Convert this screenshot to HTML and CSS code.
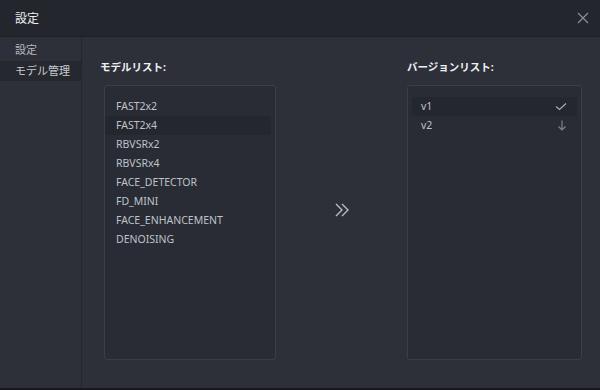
FILE: index.html
```html
<!DOCTYPE html>
<html>
<head>
<meta name="viewport" content="width=device-width, initial-scale=1">
<link rel="stylesheet" href="styles.css">
</head>
<body>

<div class="window">
  <div class="titlebar">
    <span class="title">設定</span>
    <button class="close_btn">
      <svg width="12" height="12" viewBox="0 0 12 12"><path d="M1 1L11 11M11 1L1 11" stroke="#8b8e97" stroke-width="1.2" fill="none"/></svg>
    </button>
  </div>

  <div class="main">
    <div class="sidebar">
      <div class="side_item">設定</div>
      <div class="side_item active">モデル管理</div>
    </div>

    <div class="content">
      <div class="column models">
        <div class="col_title">モデルリスト:</div>
        <div class="listbox">
          <div class="row">FAST2x2</div>
          <div class="row selected">FAST2x4</div>
          <div class="row">RBVSRx2</div>
          <div class="row">RBVSRx4</div>
          <div class="row">FACE_DETECTOR</div>
          <div class="row">FD_MINI</div>
          <div class="row">FACE_ENHANCEMENT</div>
          <div class="row">DENOISING</div>
        </div>
      </div>

      <div class="middle">
        <svg width="16" height="16" viewBox="0 0 16 16"><path d="M2 2L8 8L2 14M8 2L14 8L8 14" stroke="#b9bcc4" stroke-width="1.4" fill="none"/></svg>
      </div>

      <div class="column versions">
        <div class="col_title">バージョンリスト:</div>
        <div class="listbox">
          <div class="row selected">
            <span>v1</span>
            <svg width="12" height="9" viewBox="0 0 12 9"><path d="M1 4.5L4.5 7.5L11 1.5" stroke="#a9acb4" stroke-width="1.2" fill="none"/></svg>
          </div>
          <div class="row">
            <span>v2</span>
            <svg width="10" height="11" viewBox="0 0 10 11"><path d="M5 0.5V10M1.5 6.5L5 10L8.5 6.5" stroke="#7d808a" stroke-width="1.2" fill="none"/></svg>
          </div>
        </div>
      </div>
    </div>
  </div>
</div>

</body>
</html>
```

FILE: styles.css
```css
html, body {
    margin: 0;
    padding: 0;
    background-color: #17191e;
}

body {
    font-family: "Noto Sans", "Noto Sans CJK JP", sans-serif;
    color: #c3c6ce;
}

.window {
    width: 600px;
    height: 388px;
    display: flex;
    flex-direction: column;
    background-color: #2d3039;
}

.titlebar {
    height: 36px;
    flex-shrink: 0;
    display: flex;
    align-items: center;
    justify-content: space-between;
    padding: 0 10px 0 15px;
    background-color: #24262d;
    border-bottom: 1px solid #1c1e23;
}

.title {
    font-size: 12px;
    color: #eceef2;
}

.close_btn {
    background: none;
    border: none;
    padding: 0;
    width: 14px;
    height: 14px;
    display: flex;
    align-items: center;
    justify-content: center;
}

.main {
    flex: 1;
    display: flex;
    min-height: 0;
}

.sidebar {
    width: 81px;
    flex-shrink: 0;
    border-right: 1px solid #24262d;
    padding-top: 3px;
}

.side_item {
    height: 20px;
    line-height: 20px;
    padding-left: 15px;
    font-size: 11px;
    color: #b4b7bf;
}

.side_item.active {
    margin-top: 1px;
    background-color: #25282f;
    color: #c7cad2;
}

.content {
    flex: 1;
    display: flex;
    padding: 22px 18px 28px 18px;
}

.column {
    display: flex;
    flex-direction: column;
}

.models {
    width: 176px;
}

.models .listbox {
    margin-left: 4px;
}

.versions {
    width: 175px;
}

.col_title {
    height: 26px;
    font-size: 10.5px;
    font-weight: bold;
    color: #eef0f4;
}

.listbox {
    flex: 1;
    background-color: #292c34;
    border: 1px solid #3b3e47;
    border-radius: 3px;
    padding-top: 11px;
}

.row {
    height: 19px;
    line-height: 19px;
    font-size: 10.5px;
    color: #bfc2ca;
    padding-left: 11px;
    margin-right: 4px;
    border-radius: 2px;
}

.row.selected {
    background-color: #24272e;
}

.versions .row {
    margin: 0 4px;
    padding: 0 10px 0 9px;
    display: flex;
    align-items: center;
    justify-content: space-between;
}

.middle {
    flex: 1;
    display: flex;
    align-items: center;
    justify-content: center;
}
```
